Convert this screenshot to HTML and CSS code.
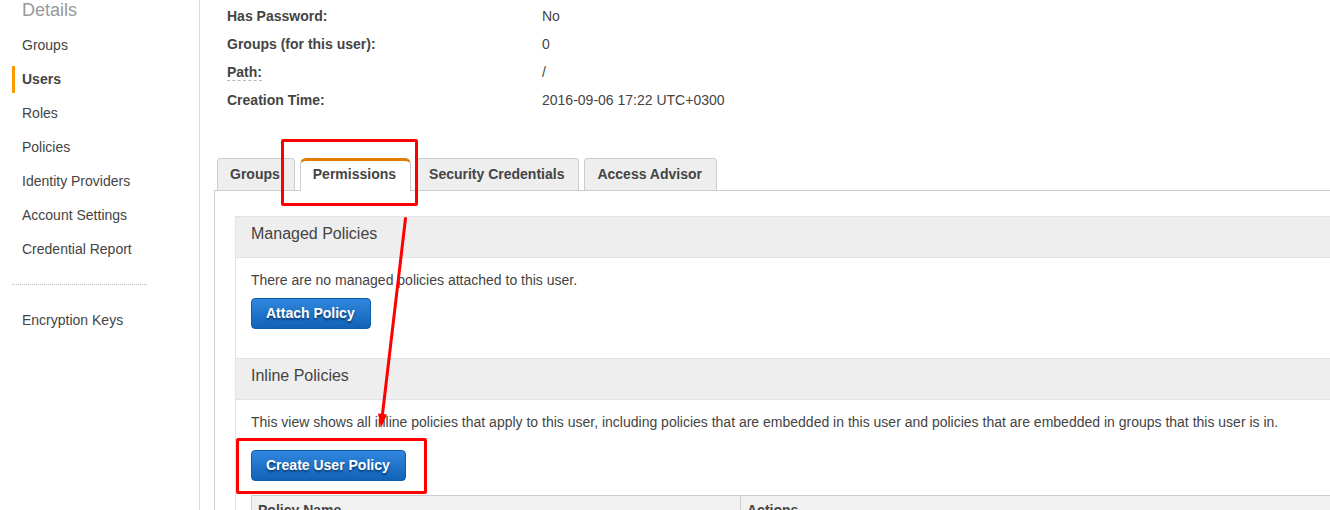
FILE: index.html
```html
<!DOCTYPE html>
<html lang="en">
<head>
<meta charset="utf-8">
<title>IAM user - Permissions</title>
<link rel="stylesheet" href="styles.css">
</head>
<body>
<div class="layout">
  <nav class="sidebar" aria-label="Details">
    <h2 class="sidebar-title">Details</h2>
    <ul class="nav-list">
      <li><a class="nav-link" href="#groups">Groups</a></li>
      <li><a class="nav-link active" href="#users" aria-current="page">Users</a></li>
      <li><a class="nav-link" href="#roles">Roles</a></li>
      <li><a class="nav-link" href="#policies">Policies</a></li>
      <li><a class="nav-link" href="#providers">Identity Providers</a></li>
      <li><a class="nav-link" href="#account">Account Settings</a></li>
      <li><a class="nav-link" href="#report">Credential Report</a></li>
    </ul>
    <hr class="divider">
    <ul class="nav-list">
      <li><a class="nav-link" href="#keys">Encryption Keys</a></li>
    </ul>
  </nav>

  <main class="content">
    <dl class="summary">
      <dt>Has Password:</dt><dd>No</dd>
      <dt>Groups (for this user):</dt><dd>0</dd>
      <dt><span class="hint">Path:</span></dt><dd>/</dd>
      <dt>Creation Time:</dt><dd>2016-09-06 17:22 UTC+0300</dd>
    </dl>

    <div class="tabs" role="tablist">
      <button class="tab" type="button" role="tab" aria-selected="false">Groups</button>
      <div class="marked">
        <button class="tab selected" type="button" role="tab" aria-selected="true">Permissions</button>
        <span class="mark mark-tab"></span>
      </div>
      <button class="tab" type="button" role="tab" aria-selected="false">Security Credentials</button>
      <button class="tab" type="button" role="tab" aria-selected="false">Access Advisor</button>
    </div>

    <div class="panel" role="tabpanel">
      <section class="policies managed">
        <h3 class="policies-title">Managed Policies</h3>
        <div class="policies-body">
          <p class="text">There are no managed policies attached to this user.</p>
          <button class="primary" type="button">Attach Policy</button>
        </div>
      </section>
      <section class="policies inline">
        <h3 class="policies-title">Inline Policies</h3>
        <div class="policies-body">
          <p class="text">This view shows all inline policies that apply to this user, including policies that are embedded in this user and policies that are embedded in groups that this user is in.</p>
          <div class="marked">
            <button class="primary" type="button">Create User Policy</button>
            <span class="mark mark-button"></span>
          </div>
          <table class="policy-table">
            <thead>
              <tr><th class="name-col" scope="col">Policy Name</th><th scope="col">Actions</th></tr>
            </thead>
          </table>
        </div>
      </section>
      <svg class="arrow" width="40" height="216" viewBox="0 0 40 216" aria-hidden="true">
        <path d="M30.500 6.500L7.500 202" stroke="#f00" stroke-width="3" stroke-linecap="round"/>
        <path d="M3 201.500L12 202.500L6 216Z" fill="#f00"/>
      </svg>
    </div>
  </main>
</div>
</body>
</html>
```
FILE: styles.css
```css
* {
  box-sizing: border-box;
}

body {
  margin: 0;
  height: 100vh;
  overflow: hidden;
  background: #fff;
  color: #444;
  font: 14px/20px "Liberation Sans", Arial, sans-serif;
}

.layout {
  display: flex;
  min-height: 100vh;
}

.sidebar {
  flex: 0 0 200px;
  padding-left: 12px;
  border-right: 1px solid #ddd;
}

.sidebar-title {
  margin: 0 0 12px;
  padding-left: 10px;
  color: #999;
  font-size: 18px;
  font-weight: 400;
}

.nav-list {
  display: flex;
  flex-direction: column;
  gap: 7px;
  margin: 0;
  padding: 0;
  list-style: none;
}

.nav-link {
  display: block;
  padding-left: 7px;
  border-left: 3px solid transparent;
  color: #444;
  line-height: 27px;
  text-decoration: none;
}

.nav-link.active {
  border-left-color: #f90;
  font-weight: 700;
}

.divider {
  width: 135px;
  margin: 21px 0 22px;
  border: 0;
  border-top: 1px dotted #bbb;
}

.content {
  flex: 1;
  min-width: 0;
  padding: 2px 0 0 14px;
}

.summary {
  display: grid;
  grid-template-columns: 315px 1fr;
  margin: 0 0 44px;
  padding-left: 13px;
  line-height: 28px;
}

.summary dt {
  font-weight: 700;
}

.summary dd {
  margin: 0;
}

.hint {
  border-bottom: 1px dashed #bbb;
}

.tabs {
  display: flex;
  gap: 5px;
  padding-left: 3px;
}

.tab {
  display: block;
  height: 32px;
  padding: 0 14px 2px 12px;
  border: 1px solid #ccc;
  border-bottom: 0;
  border-radius: 4px 4px 0 0;
  background: #eee;
  color: #444;
  font: 700 14px/20px "Liberation Sans", Arial, sans-serif;
}

.tab.selected {
  height: 33px;
  margin-bottom: -1px;
  padding-bottom: 5px;
  border-top: 3px solid #e07b00;
  border-radius: 6px 6px 0 0;
  background: #fff;
}

.marked {
  position: relative;
  z-index: 1;
  width: fit-content;
}

.mark {
  position: absolute;
  border: 3px solid #f00;
  border-radius: 2px;
  pointer-events: none;
}

.mark-tab {
  inset: -19px -7px -16px -19px;
}

.mark-button {
  inset: -12px -21px -13px -15px;
}

.panel {
  position: relative;
  padding: 25px 0 0 20px;
  border: 1px solid #ccc;
  border-width: 1px 0 0 1px;
}

.policies {
  border-left: 1px solid #e3e3e3;
}

.policies-title {
  margin: 0;
  padding: 7px 15px 13px;
  border: 1px solid #e3e3e3;
  border-width: 1px 0;
  background: #eee;
  font-size: 16px;
  font-weight: 400;
}

.policies-body {
  padding: 12px 0 0 15px;
}

.managed .policies-body {
  padding-bottom: 29px;
}

.text {
  margin: 0 0 8px;
}

.inline .text {
  margin-bottom: 18px;
}

.primary {
  display: block;
  height: 31px;
  padding: 0 15px 2px 14px;
  border: 1px solid #0e5cab;
  border-radius: 4px;
  background: linear-gradient(#3087dd, #1263b8);
  color: #fff;
  font: 700 14px/20px "Liberation Sans", Arial, sans-serif;
  text-shadow: 0 2px 2px #0a3a70;
}

.policy-table {
  width: 100%;
  margin-top: 14px;
  border-collapse: separate;
  border-spacing: 0;
  table-layout: fixed;
  border-top: 1px solid #ccc;
}

.policy-table th {
  padding: 4px 6px;
  border-left: 1px solid #ccc;
  background: #f1f1f1;
  text-align: left;
}

.name-col {
  width: 489px;
}

.arrow {
  position: absolute;
  top: 21px;
  left: 160px;
  z-index: 2;
  fill: none;
  pointer-events: none;
}
```
